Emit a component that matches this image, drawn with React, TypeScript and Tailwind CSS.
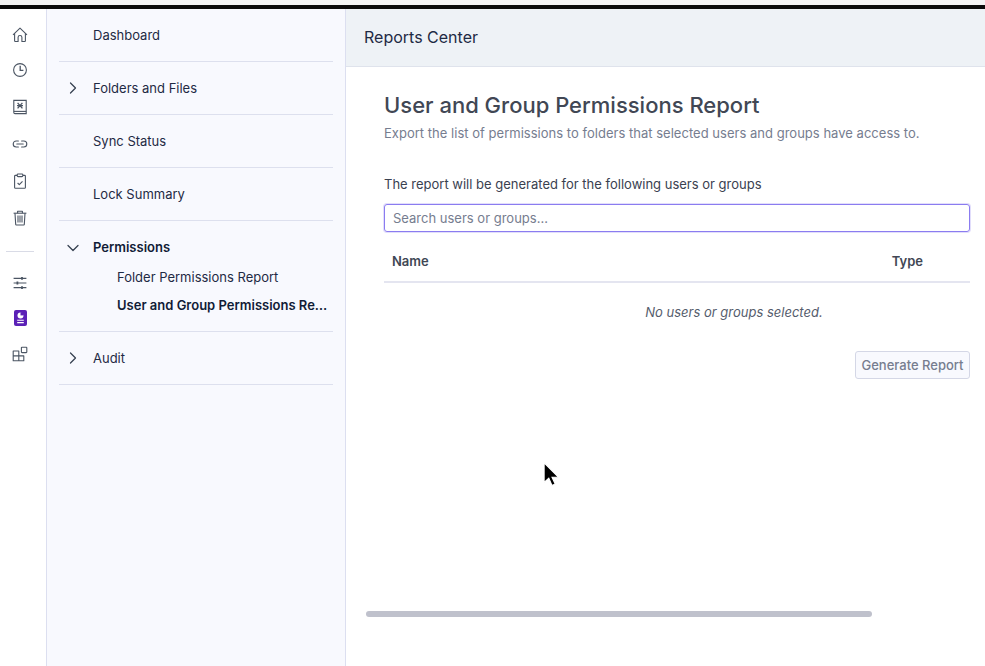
import React from "react";
import { ChevronDown, ChevronRight } from "lucide-react";

const iconCls = "w-[16px] h-[16px] text-[#4b5563]";

function HomeIcon() {
  return (
    <svg viewBox="0 0 16 16" fill="none" stroke="currentColor" strokeWidth="1.1" strokeLinejoin="round" className={`${iconCls} -mb-[2px]`}>
      <path d="M1 7.8 8 1.2l7 6.6" />
      <path d="M2.6 6.4v7.4c0 .4.3.7.7.7h2.8v-4.2c0-1 .8-1.8 1.9-1.8s1.9.8 1.9 1.8v4.2h2.8c.4 0 .7-.3.7-.7V6.4" />
    </svg>
  );
}

function ClockIcon() {
  return (
    <svg viewBox="0 0 16 16" fill="none" stroke="currentColor" strokeWidth="1.1" className={iconCls}>
      <circle cx="8" cy="8" r="6.4" />
      <path d="M8.2 3.8v4.6h3.2" strokeWidth="1.3" />
    </svg>
  );
}

function BookIcon() {
  return (
    <svg viewBox="0 0 16 16" fill="none" stroke="currentColor" strokeWidth="1.1" className={iconCls}>
      <path d="M1.8 1.4h12.4v13.2H3a1.2 1.2 0 0 1-1.2-1.2z" />
      <path d="M1.8 12.4h12.4" />
      <path d="M5.6 3.8 8 6.6l2.4-2.8M5.6 9.4 8 6.6l2.4 2.8M5 6.6h6" strokeWidth="1.3" />
    </svg>
  );
}

function LinkIcon() {
  return (
    <svg viewBox="0 0 16 16" fill="none" stroke="currentColor" strokeWidth="1.1" strokeLinecap="round" className={iconCls}>
      <path d="M6.4 5H4.2a3 3 0 0 0 0 6h2.2" />
      <path d="M9.6 5h2.2a3 3 0 0 1 0 6H9.6" />
      <path d="M4.8 8h6.4" />
    </svg>
  );
}

function ClipboardIcon() {
  return (
    <svg viewBox="0 0 16 16" fill="none" stroke="currentColor" strokeWidth="1.1" strokeLinejoin="round" className={iconCls}>
      <path d="M5.2 2.4H3.4c-.5 0-.8.3-.8.8v11.2c0 .5.3.8.8.8h9.2c.5 0 .8-.3.8-.8V3.2c0-.5-.3-.8-.8-.8h-1.8" />
      <rect x="5.2" y="1" width="5.6" height="2.6" rx=".8" />
      <path d="m5.6 10 1.7 1.7 3.2-3.4" />
    </svg>
  );
}

function TrashIcon() {
  return (
    <svg viewBox="0 0 16 16" fill="none" stroke="currentColor" strokeWidth="1.1" strokeLinejoin="round" className={iconCls}>
      <path d="M1.6 3.2h12.8" />
      <path d="M5.6 3.2V1.2h4.8v2" />
      <path d="M3 3.2l.7 11.2c0 .4.3.6.7.6h7.2c.4 0 .7-.2.7-.6L13 3.2" />
      <path d="M6 5.6v7M8 5.6v7M10 5.6v7" />
    </svg>
  );
}

function SlidersIcon() {
  return (
    <svg viewBox="0 0 16 16" fill="none" stroke="currentColor" strokeWidth="1.1" className={iconCls}>
      <path d="M1.6 3.4h12.8M1.6 8h12.8M1.6 12.6h12.8" />
      <path d="M10 2v2.8M5.4 6.6v2.8M10 11.2V14" strokeWidth="1.8" />
    </svg>
  );
}

function ReportsIcon() {
  return (
    <div className="w-[13px] h-[16px] rounded-[2px] bg-[#5b21b6] flex items-center justify-center">
      <svg viewBox="0 0 13 16" fill="none" className="w-[13px] h-[16px]">
        <circle cx="6.5" cy="5.4" r="3" fill="#fff" />
        <path d="M6.5 5.4V2.2h3.4v3.2z" fill="#5b21b6" />
        <path d="M3.2 10.2h6.6M3.2 12.6h6.6" stroke="#fff" strokeWidth="1.1" />
      </svg>
    </div>
  );
}

function AppsIcon() {
  return (
    <svg viewBox="0 0 16 16" fill="none" stroke="currentColor" strokeWidth="1.1" strokeLinejoin="round" className={`${iconCls} mt-[1px]`}>
      <path d="M1.2 5h5.6v9.8H1.2zM1.2 9.9h10.6v4.9H6.8V5" />
      <rect x="9.4" y="1.2" width="5.4" height="5.4" rx=".6" />
    </svg>
  );
}

function NavRow({ label, chevron }: { label: string; chevron?: boolean }) {
  return (
    <div className="h-[53px] border-b border-[#dde0ee] flex items-center text-[13px] text-[#1f2a44]">
      <div className="w-[34px] pl-[4px] flex-none">
        {chevron && <ChevronRight className="w-[20px] h-[20px] text-[#374151]" strokeWidth={1.5} />}
      </div>
      <span className="pt-[1px]">{label}</span>
    </div>
  );
}

export default function App() {
  return (
    <div className="h-[666px] w-[985px] overflow-hidden bg-white flex flex-col font-['Inter',sans-serif] relative">
      <div className="h-[5px] bg-[#f4f4f4] flex-none" />
      <div className="h-[4px] bg-[#0b0b0b] flex-none" />
      <div className="flex flex-1 min-h-0">
        {/* icon rail */}
        <div className="w-[47px] flex-none border-r border-[#dcdff0] flex flex-col items-center pt-[18px] pr-[6px]">
          <div className="flex flex-col gap-[21px] items-center">
            <HomeIcon />
            <ClockIcon />
            <BookIcon />
            <LinkIcon />
            <ClipboardIcon />
            <TrashIcon />
          </div>
          <div className="w-[28px] h-px bg-[#d9dbe6] mt-[25px] mb-[23px]" />
          <div className="flex flex-col gap-[19px] items-center">
            <SlidersIcon />
            <ReportsIcon />
            <AppsIcon />
          </div>
        </div>

        {/* sidebar */}
        <div className="w-[299px] flex-none bg-[#f8f9fe] border-r border-[#dcdff0] px-[12px]">
          <NavRow label="Dashboard" />
          <NavRow label="Folders and Files" chevron />
          <NavRow label="Sync Status" />
          <NavRow label="Lock Summary" />
          <div className="h-[111px] border-b border-[#dde0ee] text-[13px] text-[#1f2a44]">
            <div className="flex items-center h-[53px]">
              <div className="w-[34px] pl-[4px] flex-none">
                <ChevronDown className="w-[20px] h-[20px] text-[#374151]" strokeWidth={1.5} />
              </div>
              <span className="font-semibold text-[#111c36]">Permissions</span>
            </div>
            <div className="pl-[58px] -mt-[11px] leading-[28px]">
              <div>Folder Permissions Report</div>
              <div className="font-semibold text-[#111c36] truncate pr-[4px]">User and Group Permissions Report</div>
            </div>
          </div>
          <NavRow label="Audit" chevron />
        </div>

        {/* main */}
        <div className="flex-1 min-w-0 flex flex-col">
          <div className="h-[58px] flex-none bg-[#eef2f6] border-b border-[#dfe3ec] flex items-center px-[18px] pb-[2px] text-[16px] text-[#1f2a44]">
            Reports Center
          </div>
          <div className="pl-[38px] pr-[15px] pt-[24px]">
            <h1 className="text-[22px] leading-[28px] font-medium text-[#414754]">User and Group Permissions Report</h1>
            <p className="text-[13px] leading-[20px] mt-[4px] tracking-[0.02px] text-[#767d8f]">
              Export the list of permissions to folders that selected users and groups have access to.
            </p>
            <p className="text-[13px] leading-[20px] mt-[31px] text-[#3a4150]">
              The report will be generated for the following users or groups
            </p>
            <div className="mt-[10px] h-[28px] border border-[#8b7cf0] rounded-[3px] shadow-[0_0_0_1px_rgba(139,124,240,0.25)] flex items-center px-[8px] pt-[1px] text-[13px] text-[#767d8f]">
              Search users or groups...
            </div>
            <div className="h-[51px] border-b-2 border-[#e4e5f0] flex items-center justify-between text-[13px] font-semibold text-[#414754] pt-[10px] pl-[8px] pr-[47px]">
              <span>Name</span>
              <span>Type</span>
            </div>
            <div className="h-[59px] flex items-center justify-center pl-[114px] text-[13px] italic text-[#565d6d]">
              No users or groups selected.
            </div>
            <div className="flex justify-end mt-[9px]">
              <button className="h-[28px] w-[115px] rounded-[3px] border border-[#d4d7e6] bg-[#f8f9fe] pt-[1px] text-[13px] font-medium text-[#767d8f]">
                Generate Report
              </button>
            </div>
          </div>
        </div>
      </div>

      {/* scrollbar thumb */}
      <div className="absolute left-[366px] top-[611px] w-[506px] h-[6px] rounded-full bg-[#bfc1cc]" />

      {/* mouse cursor */}
      <svg viewBox="0 0 16 24" className="absolute left-[542px] top-[461px] w-[17px] h-[26px]">
        <path d="M2 1.5v18.5l4.4-4 3 6.8 3-1.3-3-6.5h6z" fill="#000" stroke="#fff" strokeWidth="1" />
      </svg>
    </div>
  );
}
